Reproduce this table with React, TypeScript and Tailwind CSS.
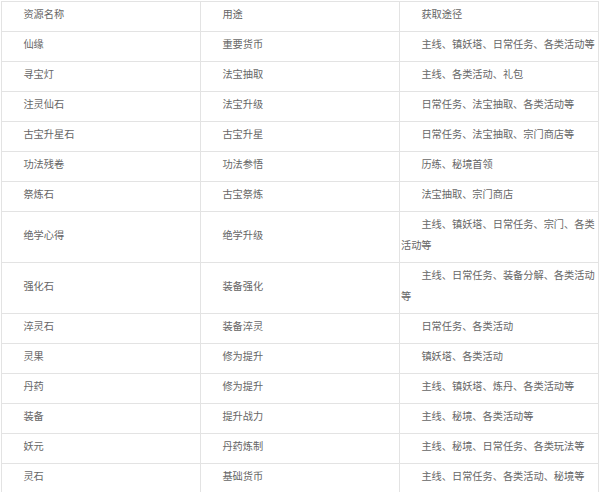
const rows: [string, string, string][] = [
  ["资源名称", "用途", "获取途径"],
  ["仙缘", "重要货币", "主线、镇妖塔、日常任务、各类活动等"],
  ["寻宝灯", "法宝抽取", "主线、各类活动、礼包"],
  ["注灵仙石", "法宝升级", "日常任务、法宝抽取、各类活动等"],
  ["古宝升星石", "古宝升星", "日常任务、法宝抽取、宗门商店等"],
  ["功法残卷", "功法参悟", "历练、秘境首领"],
  ["祭炼石", "古宝祭炼", "法宝抽取、宗门商店"],
  ["绝学心得", "绝学升级", "主线、镇妖塔、日常任务、宗门、各类活动等"],
  ["强化石", "装备强化", "主线、日常任务、装备分解、各类活动等"],
  ["淬灵石", "装备淬灵", "日常任务、各类活动"],
  ["灵果", "修为提升", "镇妖塔、各类活动"],
  ["丹药", "修为提升", "主线、镇妖塔、炼丹、各类活动等"],
  ["装备", "提升战力", "主线、秘境、各类活动等"],
  ["妖元", "丹药炼制", "主线、秘境、日常任务、各类玩法等"],
  ["灵石", "基础货币", "主线、日常任务、各类活动、秘境等"],
];

export default function App() {
  return (
    <div className="w-[600px] h-[492px] overflow-hidden bg-white pt-px pl-px font-['Noto_Sans_CJK_SC','Noto_Sans',sans-serif] text-[10.2px] text-[#666]">
      <table className="w-[596px] table-fixed border-collapse">
        <tbody>
          {rows.map((row, i) => (
            <tr key={i}>
              {row.map((cell, j) => (
                <td
                  key={j}
                  className="w-[199px] border border-[#e3e3e3] px-px pt-px align-middle"
                >
                  <p className="mb-[7px] indent-[2em] leading-[21px]">{cell}</p>
                </td>
              ))}
            </tr>
          ))}
        </tbody>
      </table>
    </div>
  );
}
